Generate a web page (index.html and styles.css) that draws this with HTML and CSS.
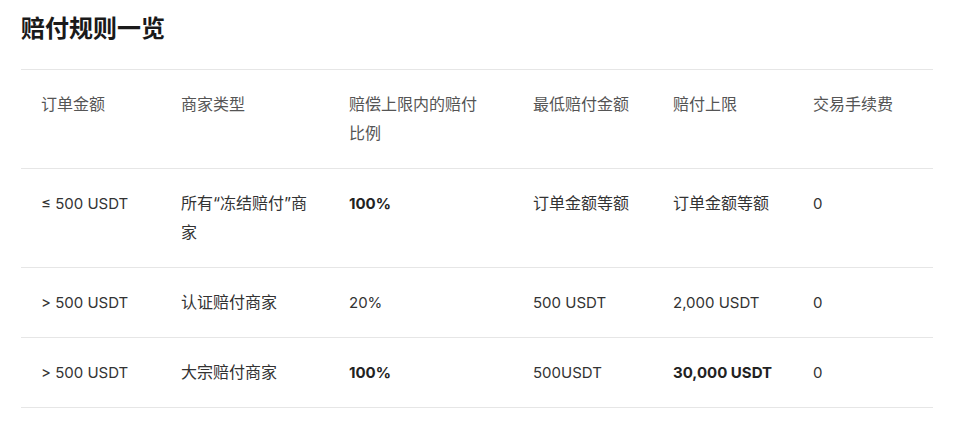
FILE: index.html
```html
<!DOCTYPE html>
<html lang="zh">
<head>
<meta charset="utf-8">
<link rel="stylesheet" href="styles.css">
</head>
<body>
<div class="page">
  <h2 class="title">赔付规则一览</h2>
  <table class="rules">
    <colgroup>
      <col class="c1"><col class="c2"><col class="c3"><col class="c4"><col class="c5"><col class="c6">
    </colgroup>
    <thead>
      <tr>
        <th>订单金额</th>
        <th>商家类型</th>
        <th>赔偿上限内的赔付<br>比例</th>
        <th>最低赔付金额</th>
        <th>赔付上限</th>
        <th>交易手续费</th>
      </tr>
    </thead>
    <tbody>
      <tr>
        <td class="en">≤ 500 USDT</td>
        <td>所有“冻结赔付”商<br>家</td>
        <td class="en"><b>100%</b></td>
        <td>订单金额等额</td>
        <td>订单金额等额</td>
        <td class="en">0</td>
      </tr>
      <tr>
        <td class="en">&gt; 500 USDT</td>
        <td>认证赔付商家</td>
        <td class="en">20%</td>
        <td class="en">500 USDT</td>
        <td class="en">2,000 USDT</td>
        <td class="en">0</td>
      </tr>
      <tr>
        <td class="en">&gt; 500 USDT</td>
        <td>大宗赔付商家</td>
        <td class="en"><b>100%</b></td>
        <td class="en">500USDT</td>
        <td class="en"><b>30,000 USDT</b></td>
        <td class="en">0</td>
      </tr>
    </tbody>
  </table>
</div>
</body>
</html>
```
FILE: styles.css
```css
html, body {
  margin: 0;
  padding: 0;
  background: #ffffff;
}
body {
  font-family: Inter, "Noto Sans CJK SC", sans-serif;
  color: #2b2b2b;
}
.page {
  padding: 12px 34px 0 21px;
}
.title {
  margin: 0 0 23px 0;
  font-size: 24px;
  line-height: 34px;
  font-weight: 700;
  color: #1a1a1a;
}
.rules {
  width: 912px;
  border-collapse: collapse;
  table-layout: fixed;
  font-size: 16px;
}
.c1 { width: 140px; }
.c2 { width: 168px; }
.c3 { width: 184px; }
.c4 { width: 140px; }
.c5 { width: 140px; }
.c6 { width: 140px; }
.rules th,
.rules td {
  text-align: left;
  vertical-align: top;
  padding: 20px;
  line-height: 29px;
  font-weight: 400;
  border-top: 1px solid #e6e6e6;
  border-bottom: 1px solid #e6e6e6;
}
.rules th {
  color: #555555;
}
.rules td {
  color: #333333;
}
.rules td.en {
  font-size: 15px;
}
.rules b {
  font-weight: 700;
  color: #222222;
}
```
